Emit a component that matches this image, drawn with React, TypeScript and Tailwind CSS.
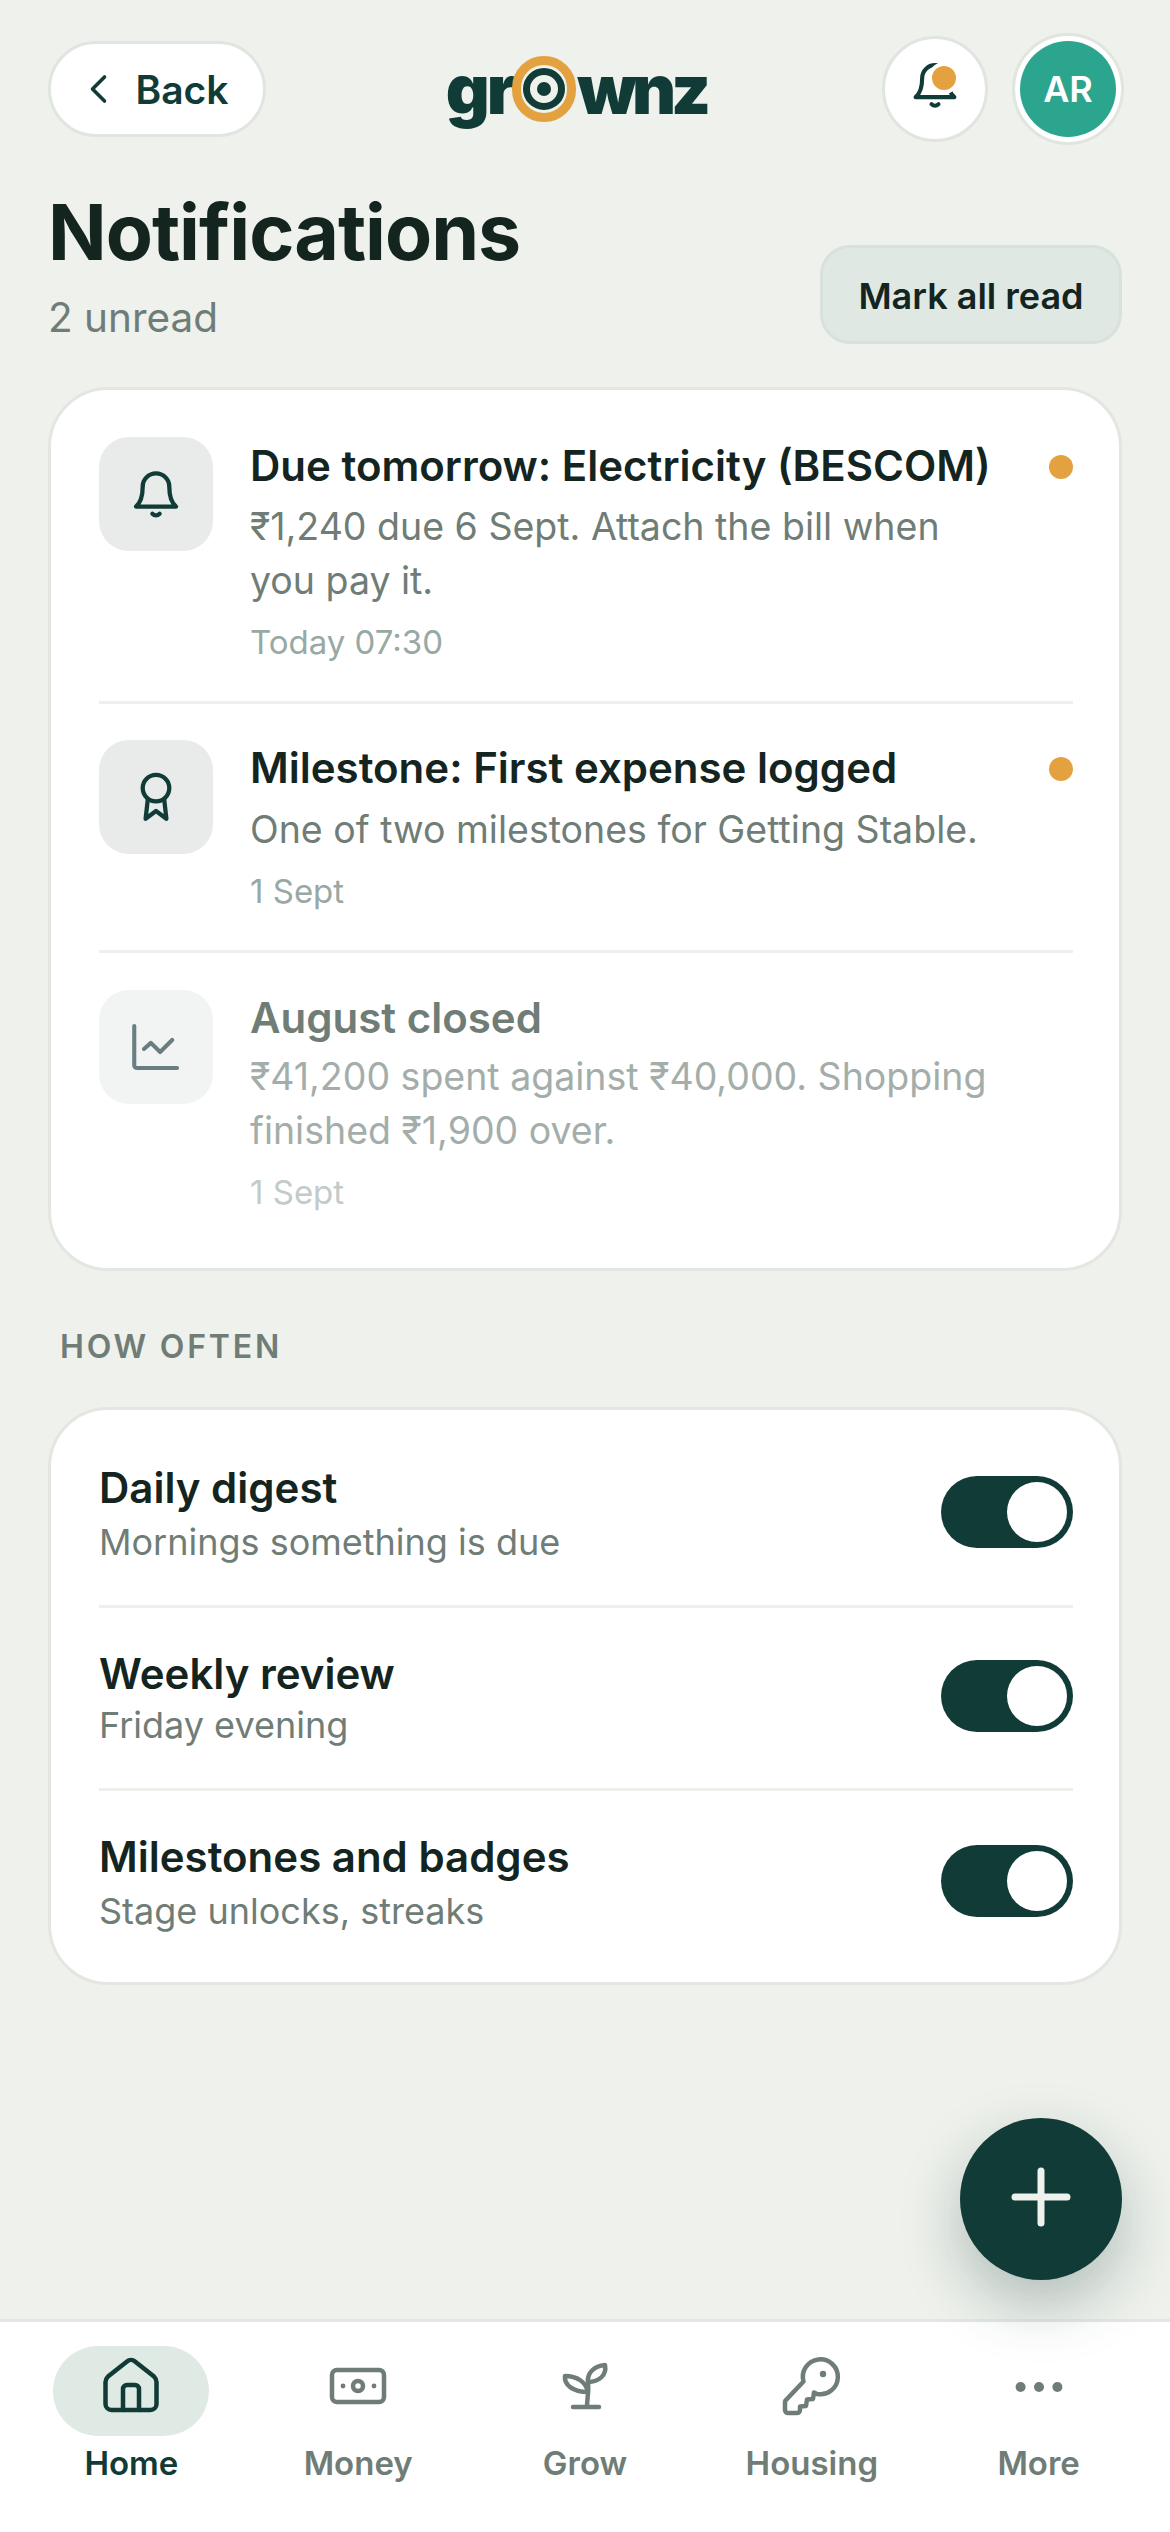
import React from "react";

const dark = "#113b36";
const muted = "#6f7d76";

function Bell({ size = 58 }: { size?: number }) {
  return (
    <svg width={size} height={size} viewBox="0 0 24 24" fill="none" stroke={dark} strokeWidth="1.770" strokeLinecap="round" strokeLinejoin="round">
      <path d="M6.500 9a5.500 5.500 0 0 1 11 0c0 4 .8 6.500 2.800 8.200H3.700C5.700 15.500 6.500 13 6.500 9Z" />
      <path d="M10.500 20.200c.9.900 2.100.900 3 0" />
    </svg>
  );
}

function Medal() {
  return (
    <svg width="58" height="58" viewBox="0 0 24 24" fill="none" stroke={dark} strokeWidth="1.770" strokeLinecap="round" strokeLinejoin="round">
      <circle cx="12" cy="8.300" r="5.500" />
      <path d="M8.600 13 7.700 21l4.300-3.200 4.300 3.200-.9-8" />
    </svg>
  );
}

function Chart({ color }: { color: string }) {
  return (
    <svg width="58" height="58" viewBox="0 0 24 24" fill="none" stroke={color} strokeWidth="1.700" strokeLinecap="round" strokeLinejoin="round">
      <path d="M3 3.300V19.500a1.200 1.200 0 0 0 1.200 1.200H20.700" />
      <path d="m7 12.800 2.900-2.500 3.800 3.800 5-5" />
    </svg>
  );
}

function NavSvg({ color, children }: { color: string; children: React.ReactNode }) {
  return (
    <svg width="72" height="72" viewBox="0 0 72 72" fill="none" stroke={color} strokeWidth="4.500" strokeLinecap="round" strokeLinejoin="round">
      {children}
    </svg>
  );
}

function HomeI({ color }: { color: string }) {
  return (
    <NavSvg color={color}>
      <path d="M10.500 27c0-2.500 1-4 2.500-5.500L32 6.500a6 6 0 0 1 8 0L59 21.500c1.500 1.500 2.500 3 2.500 5.500V49a6 6 0 0 1-6 6H16.500a6 6 0 0 1-6-6Z" />
      <path d="M28 55V34a4 4 0 0 1 4-4h8a4 4 0 0 1 4 4V55" />
    </NavSvg>
  );
}

function MoneyI({ color }: { color: string }) {
  return (
    <NavSvg color={color}>
      <rect x="10" y="15" width="52" height="32" rx="5" />
      <circle cx="36" cy="31" r="5" />
      <circle cx="21" cy="31" r="2.400" fill={color} stroke="none" />
      <circle cx="52" cy="31" r="2.400" fill={color} stroke="none" />
    </NavSvg>
  );
}

function PlantI({ color }: { color: string }) {
  return (
    <NavSvg color={color}>
      <path d="M24 52H50" />
      <path d="M39 27C40 36 38 44 38 52" />
      <path d="M39 27C38 18 45 11 56 10C58 20 50 27 39 27Z" />
      <path d="M39 37C37 27 28 21 16 21C15 30 24 37 39 37Z" />
    </NavSvg>
  );
}

function KeyI({ color }: { color: string }) {
  return (
    <NavSvg color={color}>
      <path d="M27.500 26.500A17.500 17.500 0 1 1 41 39L38 37.500 37 44 31 44.500 30 51 24 51.500V55a3 3 0 0 1-3 3H12a3 3 0 0 1-3-3V47a3 3 0 0 1 1-2Z" />
      <circle cx="47" cy="19" r="3.200" fill={color} stroke="none" />
    </NavSvg>
  );
}

function DotsI({ color }: { color: string }) {
  return (
    <NavSvg color={color}>
      <circle cx="17.600" cy="32" r="5" fill={color} stroke="none" />
      <circle cx="36" cy="32" r="5" fill={color} stroke="none" />
      <circle cx="54.400" cy="32" r="5" fill={color} stroke="none" />
    </NavSvg>
  );
}

function Toggle() {
  return (
    <div className="w-[132px] h-[72px] rounded-full bg-[#113b36] p-[6px] flex justify-end shrink-0 mb-[6px]">
      <div className="w-[60px] h-[60px] rounded-full bg-white" />
    </div>
  );
}

function NotificationRow({
  icon,
  title,
  lines,
  time,
  unread,
  faded,
  boxClass,
  rowClass,
  textClass,
  bodyClass,
}: {
  icon: React.ReactNode;
  title: string;
  lines: string[];
  time: string;
  unread?: boolean;
  faded?: boolean;
  boxClass: string;
  rowClass: string;
  textClass: string;
  bodyClass: string;
}) {
  return (
    <div className={`flex gap-[37px] ${rowClass}`}>
      <div className={`w-[114px] h-[114px] rounded-[30px] flex items-center justify-center shrink-0 ${boxClass}`}>{icon}</div>
      <div className={`flex-1 min-w-0 ${textClass}`}>
        <div className="flex justify-between items-start">
          <div className={`text-[42px] leading-[52px] font-semibold ${faded ? "text-[#6f7d76]" : "text-[#14241f]"}`}>{title}</div>
          {unread && <div className="w-[24px] h-[24px] rounded-full bg-[#e3a23f] mt-[15px] shrink-0" />}
        </div>
        <div className={`text-[37.500px] leading-[54px] ${bodyClass} ${faded ? "text-[#a3aeaa]" : "text-[#6f7d76]"}`}>
          {lines.map((l) => (
            <div key={l}>{l}</div>
          ))}
        </div>
        <div className={`text-[33px] leading-[44px] mt-[12px] ${faded ? "text-[#c2cbc8]" : "text-[#98a8a3]"}`}>{time}</div>
      </div>
    </div>
  );
}

function SettingRow({ title, sub, rowClass, subClass }: { title: string; sub: string; rowClass: string; subClass: string }) {
  return (
    <div className={`flex items-center justify-between ${rowClass}`}>
      <div>
        <div className="text-[42px] leading-[52px] font-semibold text-[#14241f]">{title}</div>
        <div className={`text-[36px] leading-[50px] text-[#6f7d76] ${subClass}`}>{sub}</div>
      </div>
      <Toggle />
    </div>
  );
}

function NavItem({ icon, label, active }: { icon: React.ReactNode; label: string; active?: boolean }) {
  return (
    <div className="flex flex-col items-center">
      <div className={`w-[156px] h-[90px] rounded-full flex items-center justify-center ${active ? "bg-[#e0eae5]" : ""}`}>{icon}</div>
      <div className={`mt-[3px] text-[33px] leading-[48px] font-semibold ${active ? "text-[#113b36]" : "text-[#6f7d76]"}`}>{label}</div>
    </div>
  );
}

export default function App() {
  return (
    <div className="relative w-[1170px] h-[2532px] overflow-hidden bg-[#eef1ec] flex flex-col font-['Inter',sans-serif]">
      <header className="flex items-center justify-between pl-[48px] pr-[46px] pt-[33px]">
        <div className="w-[218px] h-[96px] rounded-full bg-white border-[3px] border-[#e0e5df] flex items-center justify-center gap-[17px] pr-[3px] text-[#113b36]">
          <svg width="36" height="36" viewBox="0 0 24 24" fill="none" stroke={dark} strokeWidth="2.400" strokeLinecap="round" strokeLinejoin="round">
            <path d="m15 4-8 8 8 8" />
          </svg>
          <span className="text-[39px] font-semibold leading-none">Back</span>
        </div>
        <div className="flex items-center text-[#113b36] text-[68px] font-black leading-none ml-[4px]">
          <span className="tracking-[-3px] relative z-0">gr</span>
          <span className="relative z-10 w-[64px] h-[66px] rounded-full border-[9px] border-[#e3a23f] bg-[#eef1ec] flex items-center justify-center -ml-[1px] mr-[1px]">
            <span className="w-[42px] h-[42px] rounded-full border-[7px] border-[#113b36] flex items-center justify-center">
              <span className="w-[14px] h-[14px] rounded-full bg-[#113b36]" />
            </span>
          </span>
          <span className="tracking-[-5px]">wnz</span>
        </div>
        <div className="flex items-center gap-[24px]">
          <div className="relative w-[106px] h-[106px] rounded-full bg-white border-[3px] border-[#e0e5df] flex items-center justify-center">
            <div className="-mt-[8px]">
              <Bell size={56} />
            </div>
            <span className="absolute top-[23px] left-[43px] w-[32px] h-[32px] rounded-full bg-[#e3a23f] border-[4px] border-white" />
          </div>
          <div className="w-[112px] h-[112px] rounded-full bg-white border-[3px] border-[#e0e5df] flex items-center justify-center">
            <div className="w-[96px] h-[96px] rounded-full bg-[#2ca58f] flex items-center justify-center text-white text-[36px] font-semibold">AR</div>
          </div>
        </div>
      </header>

      <div className="flex items-end justify-between pl-[48px] pr-[48px] mt-[45px]">
        <div>
          <h1 className="text-[77px] leading-[84px] font-bold text-[#14241f] tracking-[-1px]">Notifications</h1>
          <div className="text-[40.500px] leading-[52px] text-[#6f7d76] mt-[18px]">2 unread</div>
        </div>
        <div className="w-[302px] h-[99px] rounded-[30px] bg-[#e0e8e3] border-[3px] border-[#d8e2dc] flex items-center justify-center text-[#14241f] text-[36px] font-semibold pt-[2px]">Mark all read</div>
      </div>

      <section className="mx-[48px] mt-[43px] rounded-[60px] bg-white border-[3px] border-[#e3e6e1] pl-[48px] pr-[46px] pt-[9px]">
        <NotificationRow
          icon={<Bell />}
          boxClass="bg-[#e8ebea]"
          rowClass="pt-[38px] pb-[37px] border-b-[3px] border-[#eef0eb]"
          textClass="pt-[3px]"
          bodyClass="mt-[8px]"
          title="Due tomorrow: Electricity (BESCOM)"
          lines={["₹1,240 due 6 Sept. Attach the bill when", "you pay it."]}
          time="Today 07:30"
          unread
        />
        <NotificationRow
          icon={<Medal />}
          boxClass="bg-[#e8ebea]"
          rowClass="pt-[36px] pb-[37px] border-b-[3px] border-[#eef0eb]"
          textClass="pt-[2px]"
          bodyClass="mt-[9px]"
          title="Milestone: First expense logged"
          lines={["One of two milestones for Getting Stable."]}
          time="1 Sept"
          unread
        />
        <NotificationRow
          icon={<Chart color="#6a7e82" />}
          boxClass="bg-[#f2f4f3]"
          rowClass="pt-[37px] pb-[54px]"
          textClass="pt-[2px]"
          bodyClass="mt-[6px]"
          title="August closed"
          lines={["₹41,200 spent against ₹40,000. Shopping", "finished ₹1,900 over."]}
          time="1 Sept"
          faded
        />
      </section>

      <div className="ml-[60px] mt-[54px] text-[32px] leading-[44px] font-semibold tracking-[2.800px] text-[#6f7d76]">HOW OFTEN</div>

      <section className="mx-[48px] mt-[38px] rounded-[60px] bg-white border-[3px] border-[#e3e6e1] pl-[48px] pr-[46px] pt-[14px]">
        <SettingRow title="Daily digest" sub="Mornings something is due" rowClass="pt-[38px] pb-[38px] border-b-[3px] border-[#eef0eb]" subClass="mt-[3px]" />
        <SettingRow title="Weekly review" sub="Friday evening" rowClass="pt-[40px] pb-[38px] border-b-[3px] border-[#eef0eb]" subClass="mt-0" />
        <SettingRow title="Milestones and badges" sub="Stage unlocks, streaks" rowClass="pt-[40px] pb-[46px]" subClass="mt-[3px]" />
      </section>

      <div className="flex-1" />

      <nav className="h-[213px] bg-white border-t-[3px] border-[#e3e7e2] grid grid-cols-5 px-[18px] pt-[24px]">
        <NavItem icon={<HomeI color={dark} />} label="Home" active />
        <NavItem icon={<MoneyI color={muted} />} label="Money" />
        <NavItem icon={<PlantI color={muted} />} label="Grow" />
        <NavItem icon={<KeyI color={muted} />} label="Housing" />
        <NavItem icon={<DotsI color={muted} />} label="More" />
      </nav>

      <div className="absolute left-[960px] top-[2118px] w-[162px] h-[162px] rounded-full bg-[#113b36] flex items-center justify-center shadow-[0_24px_60px_rgba(17,59,54,0.28)]">
        <svg width="60" height="60" viewBox="0 0 60 60" fill="none" stroke="#eef1ec" strokeWidth="7" strokeLinecap="round" className="-mt-[5px]">
          <path d="M30 4V56M4 30H56" />
        </svg>
      </div>
    </div>
  );
}
